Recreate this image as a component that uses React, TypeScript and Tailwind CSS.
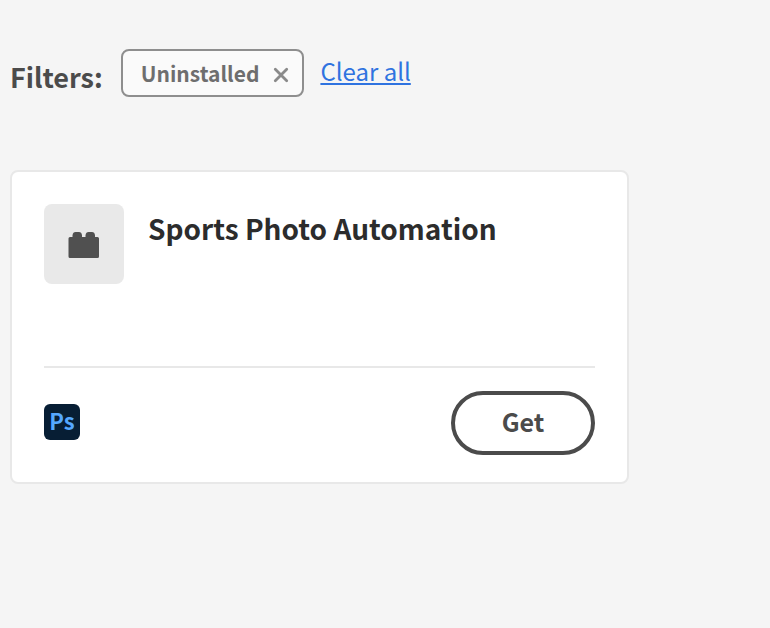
import React, { useState } from "react";

const BrickIcon: React.FC = () => (
  <svg viewBox="0 0 32 28" className="mt-px h-7 w-8" fill="#505050" aria-hidden="true">
    <path d="M2 6h2.500V4.200Q5 1 7.500 1h3.500q2.500 0 3 3.200V6h3.500V4.200Q18 1 20.500 1h3.500q2.500 0 3 3.200V6h2.500q1.500 0 1.500 1.500V25.500q0 1.500-1.500 1.500H2q-1.500 0-1.500-1.500V7.500Q.5 6 2 6z" />
  </svg>
);

const CrossIcon: React.FC = () => (
  <svg viewBox="0 0 16 16" className="mt-1 size-4" stroke="#8a8a8a" strokeWidth="2.800" strokeLinecap="round" aria-hidden="true">
    <path d="M2.300 2.300l11.400 11.400M13.700 2.300L2.300 13.700" />
  </svg>
);

const plugins = [{ name: "Sports Photo Automation", host: "Ps" }];

const PluginCard: React.FC<{ name: string; host: string }> = ({ name, host }) => (
  <article className="rounded-lg border-2 border-[#e8e8e8] bg-white px-8 pt-8 pb-[27px]">
    <div className="flex gap-6">
      <div className="flex size-20 shrink-0 items-center justify-center rounded-lg bg-[#e9e9e9]">
        <BrickIcon />
      </div>
      <h2 className="pt-1 text-[28px] leading-10 font-bold text-[#2c2c2c]">{name}</h2>
    </div>

    <div className="mt-[82px] flex items-start justify-between border-t-2 border-[#e8e8e8] pt-[23px]">
      <span className="mt-[13px] flex size-9 items-center justify-center rounded-md bg-[#071e34] pb-1 text-[22px] leading-8 font-bold text-[#55a8ff]">
        {host}
      </span>
      <button type="button" className="h-16 w-36 rounded-full border-4 border-[#4b4b4b] pb-1 text-[25px] leading-8 font-bold text-[#4b4b4b]">
        Get
      </button>
    </div>
  </article>
);

const App: React.FC = () => {
  const [filters, setFilters] = useState(["Uninstalled"]);

  return (
    <main className="min-h-screen bg-[#f5f5f5] px-[10px] pt-[49px] font-['Noto_Sans_CJK_SC','Noto_Sans',sans-serif]">
      <div className="flex h-12 items-center">
        <h1 className="pt-2 text-[27px] leading-10 font-bold text-[#4b4b4b]">Filters:</h1>
        {filters.map((filter) => (
          <div key={filter} className="ml-[18px] flex h-12 items-center gap-[14px] rounded-lg border-2 border-[#8e8e8e] bg-[#fafafa] pr-[13px] pl-[18px]">
            <span className="text-[21px] leading-8 font-bold text-[#6e6e6e]">{filter}</span>
            <button type="button" aria-label={`Remove ${filter}`} onClick={() => setFilters(filters.filter((f) => f !== filter))}>
              <CrossIcon />
            </button>
          </div>
        ))}
        <a
          href="#"
          onClick={() => setFilters([])}
          className="ml-4 pb-1 text-[24px] leading-8 text-[#2f73e0] underline decoration-2 underline-offset-2"
        >
          Clear all
        </a>
      </div>

      <section className="mt-[73px] max-w-[619px]">
        {plugins.map((plugin) => (
          <PluginCard key={plugin.name} name={plugin.name} host={plugin.host} />
        ))}
      </section>
    </main>
  );
};

export default App;
